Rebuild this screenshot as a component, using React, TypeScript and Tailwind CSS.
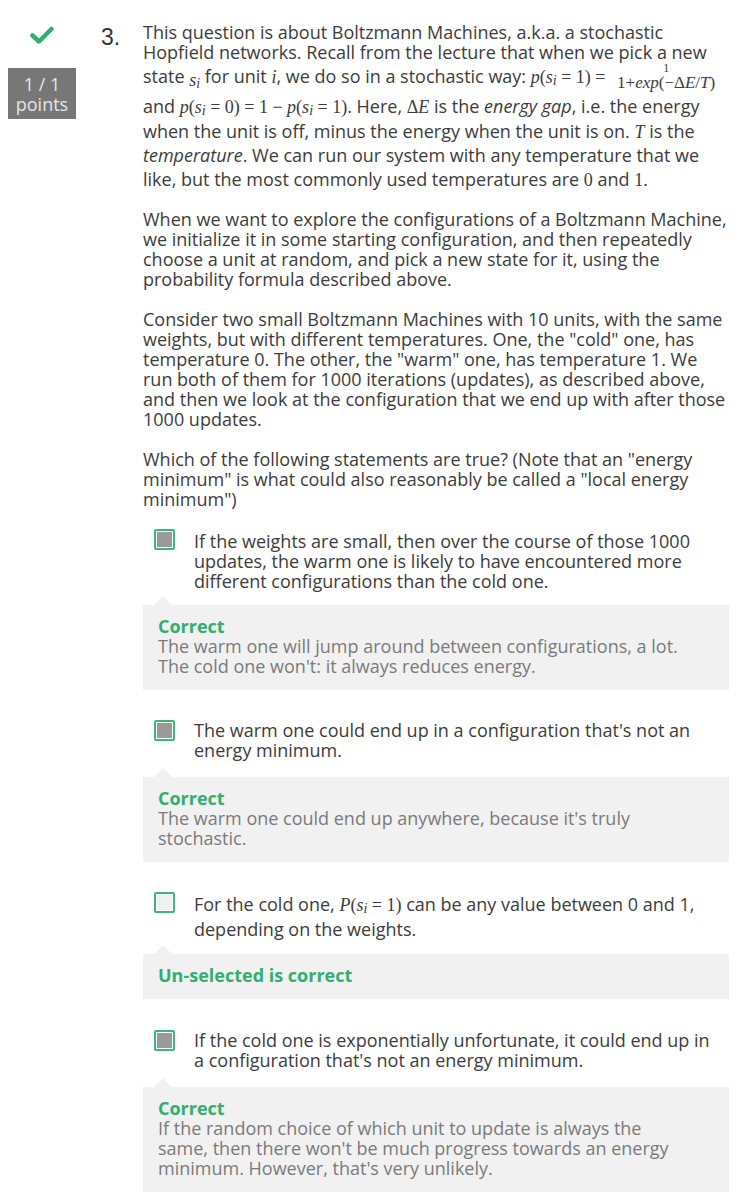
import type { ReactNode } from "react";

const serif = "font-['Liberation_Serif','Times_New_Roman',serif]";

function M({ children, i = false }: { children: ReactNode; i?: boolean }) {
  return <span className={`${serif} text-[18px] ${i ? "italic" : ""}`}>{children}</span>;
}

function Si() {
  return (
    <>
      <i>s</i>
      <i className="relative top-[2px] text-[14px]">i</i>
    </>
  );
}

function Checkbox({ checked }: { checked: boolean }) {
  return (
    <span className="flex h-[21px] w-[21px] shrink-0 items-center justify-center rounded-[2px] border-2 border-[#3bb77a] bg-white p-[1px]">
      <span className={`h-full w-full ${checked ? "bg-[#9a9a9a]" : "bg-[#f0f0f0]"}`} />
    </span>
  );
}

function Feedback({ title, mt, children }: { title: string; mt: string; children?: ReactNode }) {
  return (
    <div className={`relative ${mt} bg-[#f1f1f1] pb-[14px] pl-[15px] pr-[38px] pt-[11px]`}>
      <span className="absolute -top-[9px] left-[11px] h-0 w-0 border-x-[9px] border-b-[9px] border-x-transparent border-b-[#f1f1f1]" />
      <div className="font-bold text-[#2fb06f]">{title}</div>
      {children && <div className="text-[#7a7a7a]">{children}</div>}
    </div>
  );
}

type OptionProps = {
  checked: boolean;
  children: ReactNode;
  title: string;
  fb?: ReactNode;
  gap: string;
  fbGap?: string;
  textPad?: string;
};

function Option({ checked, children, title, fb, gap, fbGap = "mt-4", textPad = "pt-0" }: OptionProps) {
  return (
    <div className={gap}>
      <div className="flex items-start pl-[11px] pr-[14px]">
        <Checkbox checked={checked} />
        <div className={`pl-[19px] ${textPad}`}>{children}</div>
      </div>
      <Feedback title={title} mt={fbGap}>
        {fb}
      </Feedback>
    </div>
  );
}

export default function App() {
  return (
    <div className="flex min-h-[1204px] w-[750px] bg-white pt-[22px] font-['Open_Sans',sans-serif] text-[18px] leading-5 text-[#3c3c3c]">
      <div className="ml-2 flex w-[68px] shrink-0 flex-col items-center">
        <svg width="24" height="18" viewBox="0 0 24 18" className="mt-[4px]">
          <path d="M2.5 9.5 L9 15.5 L21.5 3" fill="none" stroke="#2fb06f" strokeWidth="4.5" strokeLinecap="round" strokeLinejoin="round" />
        </svg>
        <div className="mt-[24px] flex h-[51px] w-[68px] flex-col items-center justify-center bg-[#777777] text-[18px] leading-5 text-[#e6e6e6]">
          <span>1 / 1</span>
          <span>points</span>
        </div>
      </div>
      <div className="ml-[25px] w-[42px] shrink-0 pt-[3px] font-['Liberation_Sans',Arial,sans-serif] text-[23px] leading-6 text-[#333]">3.</div>
      <div className="w-[586px] shrink-0">
        <p className="whitespace-nowrap">
          <span className="block h-5">This question is about Boltzmann Machines, a.k.a. a stochastic</span>
          <span className="block h-5">Hopfield networks. Recall from the lecture that when we pick a new</span>
          <span className="block h-[26px] pt-1">
            state{" "}
            <M>
              <span className="relative top-[3px]">
                <Si />
              </span>
            </M>{" "}
            for unit <M i>i</M>, we do so in a stochastic way:{" "}
            <M>
              <i>p</i>(<Si /> = 1) =
            </M>{" "}
            <span className="relative inline-block h-0 w-[112px]">
              <span className={`${serif} absolute bottom-[-7px] left-0 flex w-full flex-col items-center text-[17px] leading-[14px]`}>
                <span className="mb-[3px] text-[12px] leading-[9px]">1</span>
                <span>
                  1+<i>exp</i>(−Δ<i>E</i>/<i>T</i>)
                </span>
              </span>
            </span>
          </span>
          <span className="block h-[33px] pt-[8px]">
            and{" "}
            <M>
              <i>p</i>(<Si /> = 0) = 1 − <i>p</i>(<Si /> = 1)
            </M>
            . Here, <M>Δ<i>E</i></M> is the <em>energy gap</em>, i.e. the energy
          </span>
          <span className="block h-6">
            when the unit is off, minus the energy when the unit is on. <M i>T</M> is the
          </span>
          <span className="block h-6">
            <em>temperature</em>. We can run our system with any temperature that we
          </span>
          <span className="block h-6">
            like, but the most commonly used temperatures are <M>0</M> and <M>1</M>.
          </span>
        </p>
        <p className="mt-4">
          When we want to explore the configurations of a Boltzmann Machine, we initialize it in some starting configuration, and
          then repeatedly choose a unit at random, and pick a new state for it, using the probability formula described above.
        </p>
        <p className="mt-5">
          Consider two small Boltzmann Machines with 10 units, with the same weights, but with different temperatures. One, the
          "cold" one, has temperature 0. The other, the "warm" one, has temperature 1. We run both of them for 1000 iterations
          (updates), as described above, and then we look at the configuration that we end up with after those 1000 updates.
        </p>
        <p className="mt-5">
          Which of the following statements are true? (Note that an "energy minimum" is what could also reasonably be called a
          "local energy minimum")
        </p>

        <Option
          gap="mt-5"
          textPad="pt-[2px]"
          fbGap="mt-[14px]"
          checked
          title="Correct"
          fb={<>The warm one will jump around between configurations, a lot. The cold one won't: it always reduces energy.</>}
        >
          If the weights are small, then over the course of those 1000 updates, the warm one is likely to have encountered more
          different configurations than the cold one.
        </Option>
        <Option gap="mt-[30px]" fbGap="mt-[17px]" checked title="Correct" fb={<>The warm one could end up anywhere, because it's truly stochastic.</>}>
          The warm one could end up in a configuration that's not an energy minimum.
        </Option>
        <Option gap="mt-[30px]" fbGap="mt-[15px]" checked={false} title="Un-selected is correct">
          <span className="leading-[24px]">
            For the cold one,{" "}
            <M>
              <i>P</i>(<Si /> = 1)
            </M>{" "}
            can be any value between 0 and 1,
          </span>{" "}
          depending on the weights.
        </Option>
        <Option
          gap="mt-[31px]"
          fbGap="mt-[17px]"
          checked
          title="Correct"
          fb={
            <>
              If the random choice of which unit to update is always the same, then there won't be much progress towards an energy
              minimum. However, that's very unlikely.
            </>
          }
        >
          If the cold one is exponentially unfortunate, it could end up in a configuration that's not an energy minimum.
        </Option>
      </div>
    </div>
  );
}
